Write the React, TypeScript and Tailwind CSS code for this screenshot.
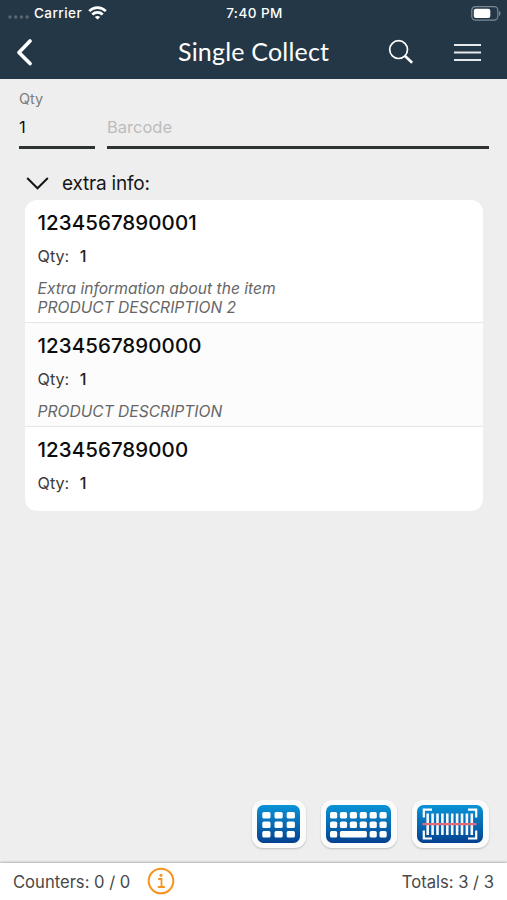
import { useState } from 'react'

interface Item {
  barcode: string
  qty: number
  description: string[]
}

const ITEMS: Item[] = [
  {
    barcode: '1234567890001',
    qty: 1,
    description: ['Extra information about the item', 'PRODUCT DESCRIPTION 2'],
  },
  { barcode: '1234567890000', qty: 1, description: ['PRODUCT DESCRIPTION'] },
  { barcode: '123456789000', qty: 1, description: [] },
]

const KEY_BUTTON =
  'h-[48px] rounded-[11px] bg-[#fbfbfb] px-[5.5px] py-[5px] shadow-[0_1px_2px_rgba(0,0,0,0.2)]'

function StatusBar() {
  return (
    <div className="grid h-[26px] grid-cols-3 items-center pl-[8px] pr-[6px] text-[13.5px] font-medium tracking-[0.45px]">
      <div className="flex items-center">
        <svg width="22" height="6" viewBox="0 0 22 6" className="mt-[7px]" fill="#5b6974">
          <circle cx="2" cy="3" r="1.7" />
          <circle cx="7.7" cy="3" r="1.7" />
          <circle cx="13.4" cy="3" r="1.7" />
          <circle cx="19.1" cy="3" r="1.7" />
        </svg>
        <span className="ml-[4px]">Carrier</span>
        <svg width="19" height="14" viewBox="0 0 19 14" className="ml-[6px]" fill="none" stroke="#fff" strokeWidth="2.7">
          <path d="M1.2 5.1C6 .5 13 .5 17.8 5.1" />
          <path d="M4.3 8.4c3-2.8 7.4-2.8 10.4 0" />
          <path d="M9.5 13.6 6.8 11c1.6-1.4 3.8-1.4 5.4 0Z" fill="#fff" stroke="none" />
        </svg>
      </div>
      <span className="text-center">7:40 PM</span>
      <svg width="31" height="15" viewBox="0 0 31 15" className="justify-self-end">
        <rect x="1.8" y=".7" width="26" height="13.4" rx="3.6" fill="none" stroke="#7c8993" strokeWidth="1.2" />
        <rect x="3.8" y="2.7" width="16.5" height="9.4" rx="2" fill="#fff" />
        <path d="M29 5v5c2-.8 2-4.2 0-5Z" fill="#7c8993" />
      </svg>
    </div>
  )
}

function Row({ item }: { item: Item }) {
  return (
    <li className="border-b border-[#e6e6e6] pl-[12.5px] last:border-0 even:bg-[#fcfcfc] last:pb-[16px]">
      <p className="pt-[9px] text-[20.5px] leading-[28px] font-medium tracking-[0.06px] text-[#0c0c0c]">
        {item.barcode}
      </p>
      <p className="mt-[7px] text-[16.2px] leading-[24px] text-[#3c3c3c]">
        Qty: <span className="ml-[6px] font-medium text-[#222]">{item.qty}</span>
      </p>
      {item.description.length > 0 && (
        <div className="mt-[11px] pb-[5px] text-[15.6px] leading-[19px] text-[#666] italic">
          {item.description.map((line) => (
            <p key={line}>{line}</p>
          ))}
        </div>
      )}
    </li>
  )
}

// Shared vertical gradient of the three input mode buttons
function BlueGradient({ id }: { id: string }) {
  return (
    <defs>
      <linearGradient id={id} x1="0" y1="0" x2="0" y2="1">
        <stop offset="0" stopColor="#0994d8" />
        <stop offset="1" stopColor="#04418f" />
      </linearGradient>
    </defs>
  )
}

function NumericIcon() {
  return (
    <svg width="43" height="38" viewBox="0 0 43 38">
      <BlueGradient id="numeric" />
      <rect width="43" height="38" rx="6.5" fill="url(#numeric)" />
      {[7, 16.5, 26].map((y) =>
        [5.3, 17.5, 29.7].map((x) => (
          <rect key={`${x}-${y}`} x={x} y={y} width="8.2" height="6.4" rx="1.5" fill="#fff" />
        )),
      )}
    </svg>
  )
}

function KeyboardIcon() {
  return (
    <svg width="65" height="38" viewBox="0 0 65 38">
      <BlueGradient id="keyboard" />
      <rect width="65" height="38" rx="6.5" fill="url(#keyboard)" />
      {[7, 16.5].map((y) =>
        [4, 13.9, 23.8, 33.7, 43.6, 53.5].map((x) => (
          <rect key={`${x}-${y}`} x={x} y={y} width="7.2" height="6.6" rx="1.7" fill="#fff" />
        )),
      )}
      <rect x="4" y="26" width="7.2" height="6.6" rx="1.7" fill="#fff" />
      <rect x="13.9" y="26" width="27" height="6.6" rx="1.7" fill="#fff" />
      <rect x="43.6" y="26" width="7.2" height="6.6" rx="1.7" fill="#fff" />
      <rect x="53.5" y="26" width="7.2" height="6.6" rx="1.7" fill="#fff" />
    </svg>
  )
}

function ScanIcon() {
  return (
    <svg width="66" height="38" viewBox="0 0 66 38">
      <BlueGradient id="scan" />
      <rect width="66" height="38" rx="6.5" fill="url(#scan)" />
      <path
        d="M6.8 12.5V4.7H15M51 4.7h8.2v7.8M6.8 25.5v8H15M51 33.5h8.2v-8"
        fill="none"
        stroke="#fff"
        strokeWidth="2.2"
      />
      {[9.4, 14.3, 19.2, 24.1, 29, 33.9, 38.8, 43.7, 48.6, 53.5].map((x) => (
        <rect key={x} x={x} y="8.5" width="2.6" height="21.5" fill="#f4f9fd" />
      ))}
      <path d="M5.5 19.2h54" stroke="#e2697a" strokeWidth="2.2" />
    </svg>
  )
}

export default function App() {
  const [qty, setQty] = useState('1')
  const [barcode, setBarcode] = useState('')
  const [open, setOpen] = useState(true)

  return (
    <div className="flex h-[900px] w-[507px] flex-col overflow-hidden bg-[#eee] font-['Inter','Liberation_Sans',sans-serif]">

      {/* Header */}
      <header className="h-[79px] shrink-0 bg-[#243746] text-white">
        <StatusBar />
        <div className="flex h-[51px] items-center pr-[26px] pl-[16px]">
          <button aria-label="Back">
            <svg width="18" height="28" viewBox="0 0 18 28" fill="none" stroke="#fff" strokeWidth="3.6" strokeLinecap="round" strokeLinejoin="round">
              <path d="M14 3 3 14.4l11 11.2" />
            </svg>
          </button>
          <h1 className="-mt-[2px] ml-[144px] font-['Lato',sans-serif] text-[25px] leading-[30px] tracking-[0.2px] whitespace-nowrap">
            Single Collect
          </h1>
          <button className="ml-auto" aria-label="Search">
            <svg width="26" height="26" viewBox="0 0 26 26" fill="none" stroke="#fff">
              <circle cx="10.6" cy="10.6" r="8.9" strokeWidth="1.7" />
              <path d="m17 17 7.2 6.8" strokeWidth="2.6" />
            </svg>
          </button>
          <button className="ml-[40px]" aria-label="Menu">
            <svg width="27" height="20" viewBox="0 0 27 20" stroke="#e6eaec" strokeWidth="2">
              <path d="M0 3h27M0 10.5h27M0 18h27" />
            </svg>
          </button>
        </div>
      </header>

      <main className="flex-1">
        {/* Entry fields */}
        <div className="flex items-end gap-[12px] pt-[11px] pr-[18px] pl-[19px]">
          <label className="w-[76px] text-[14.5px] leading-[18px] text-[#7c7c7c]">
            Qty
            <input
              value={qty}
              onChange={(e) => setQty(e.target.value)}
              className="block h-[41px] w-full border-b-[3px] border-[#2e3232] pb-[1px] text-[16.5px] text-[#111] outline-none"
            />
          </label>
          <input
            value={barcode}
            placeholder="Barcode"
            onChange={(e) => setBarcode(e.target.value)}
            className="block h-[41px] min-w-0 flex-1 border-b-[3px] border-[#2e3232] pb-[1px] text-[16.5px] text-[#111] outline-none placeholder:text-[#bcbcbc]"
          />
        </div>

        <button
          onClick={() => setOpen(!open)}
          className="mt-[22px] flex h-[26px] items-center pl-[26px] text-[19px] tracking-[-0.2px] text-[#161616]"
        >
          <svg width="23" height="14" viewBox="0 0 23 14" fill="none" stroke="#161616" strokeWidth="2">
            <path d="m1.2 1 10.3 10.3L21.8 1" />
          </svg>
          <span className="ml-[13px]">extra info:</span>
        </button>

        {open && (
          <ul className="mt-[3px] mr-[24.5px] ml-[25px] overflow-hidden rounded-[12px] bg-white">
            {ITEMS.map((item) => (
              <Row key={item.barcode} item={item} />
            ))}
          </ul>
        )}
      </main>

      {/* Input modes */}
      <div className="flex shrink-0 justify-end gap-[15px] pr-[18.5px] pb-[15px]">
        <button className={KEY_BUTTON} aria-label="Numeric keypad">
          <NumericIcon />
        </button>
        <button className={KEY_BUTTON} aria-label="Keyboard">
          <KeyboardIcon />
        </button>
        <button className={KEY_BUTTON} aria-label="Scan">
          <ScanIcon />
        </button>
      </div>

      {/* Totals */}
      <footer className="flex h-[37px] shrink-0 items-center bg-white pr-[13px] pl-[13px] text-[16.6px] text-[#484848] shadow-[0_-1px_2px_rgba(0,0,0,0.25)]">
        <span className="mt-[1px]">Counters: 0 / 0</span>
        <svg width="28" height="28" viewBox="0 0 28 28" className="mb-[1px] ml-[17px]" fill="none" stroke="#f7931e">
          <circle cx="14" cy="14" r="12.3" strokeWidth="2" />
          <path d="M11.2 12h3.3v8M10.8 20h7" strokeWidth="1.8" />
          <circle cx="14" cy="8.3" r="1.5" fill="#f7931e" stroke="none" />
        </svg>
        <span className="mt-[1px] ml-auto">Totals: 3 / 3</span>
      </footer>

    </div>
  )
}
